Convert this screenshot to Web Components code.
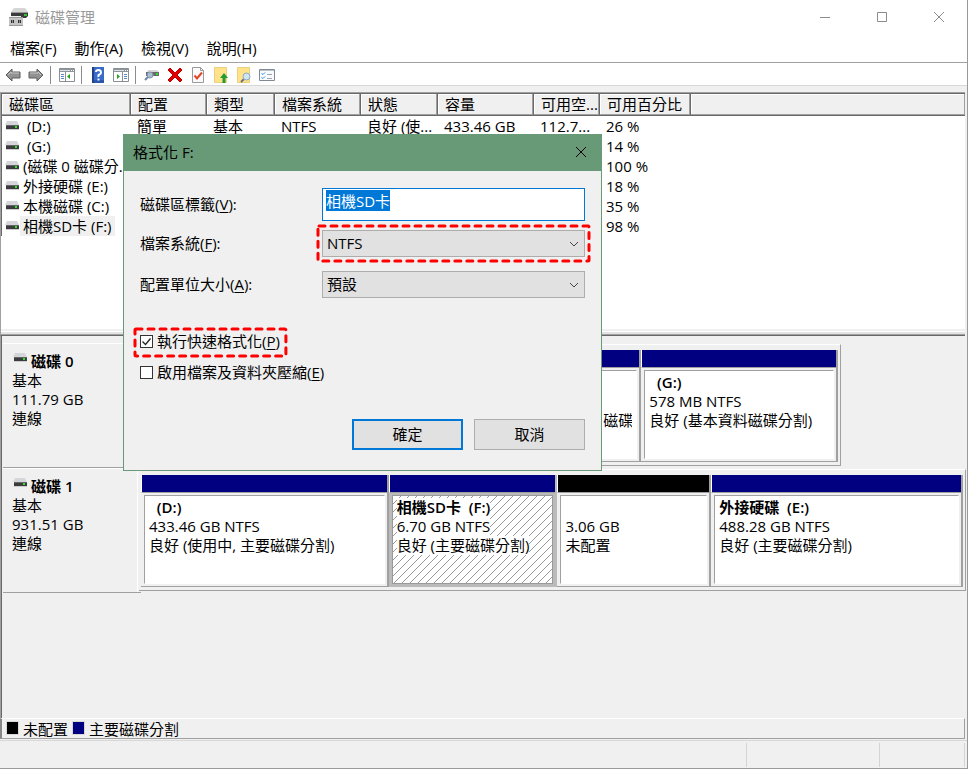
<!DOCTYPE html>
<html lang="zh-Hant">
<head>
<meta charset="utf-8">
<title>磁碟管理</title>
<style>
body { margin: 0; background: #f0f0f0; color: #000; font: 15px/19px "Open Sans", "Noto Sans CJK TC", sans-serif; }
</style>
</head>
<body>
<disk-app></disk-app>
<script>
const define = (name, html, setup) => customElements.define(name, class extends HTMLElement {
  connectedCallback() {
    if (this.shadowRoot) return;
    const t = document.createElement('template');
    t.innerHTML = '<style>*{box-sizing:border-box}:host{box-sizing:border-box}button,input,select{font:inherit;color:inherit;margin:0}button{padding:0;border:0;background:none}</style>' + html;
    this.attachShadow({ mode: 'open' }).append(t.content.cloneNode(true));
    if (setup) setup(this, this.shadowRoot);
  }
});

define('drive-icon', `
<style>:host{display:inline-block;width:14px;height:9px;flex:none}svg{display:block}</style>
<svg width="14" height="9" viewBox="0 0 14 9" aria-hidden="true"><path d="M2 0h10l2 4H0z" fill="#d5d6d9"/><path d="M1 4h13v4H1z" fill="#3c3c3e"/><path d="M1 4h13v1H1z" fill="#666"/><path d="M1 8h13v1H1z" fill="#ccc"/><path d="M10 5h2v2h-2z" fill="#2fe02f"/></svg>`);

define('window-title', `
<style>
:host{display:flex;align-items:center;height:35px;padding-left:8px;background:#fff;color:#999}
h1{margin:0 auto 0 5px;padding-bottom:1px;font-size:15px;line-height:20px;font-weight:400}
button{width:57px;height:34px;padding-bottom:1px;display:grid;place-items:center}
button svg{fill:none;stroke:#8c8c8c}
</style>
<svg width="22" height="20" viewBox="0 0 22 20" aria-hidden="true"><path d="M6 0h11l3 4H3z" fill="#d6d6d6"/><path d="M3 4h17v4l-2 2H3z" fill="#3b3b3b"/><path d="M3 4h17v1H3z" fill="#999"/><path d="M16 6h3v2h-3z" fill="#35c435"/><path d="M3 8h10v2H3z" fill="#f0f0f0"/><path d="M1 9h14v9H1z" fill="#c4c4c4"/><path d="M1 9h14v1H1zM1 17h14v1H1z" fill="#9a9a9a"/><path d="M3 12h3v3H3zM10 12h3v3h-3z" fill="#333"/><path d="M4 12h1v3H4zM11 12h1v3h-1z" fill="#888"/></svg>
<h1><slot></slot></h1>
<button aria-label="最小化"><svg width="12" height="12"><path d="M1 6.500h10"/></svg></button>
<button aria-label="最大化"><svg width="12" height="12"><path d="M1.500 1.500h9v9h-9z"/></svg></button>
<button aria-label="關閉"><svg width="12" height="12"><path d="M1 1l10 10M11 1L1 11"/></svg></button>`);

define('menu-bar', `
<style>
:host{display:block;background:#fff;border-bottom:1px solid #a0a0a0}
nav{display:flex;gap:18px;padding:3px 10px 4px;height:27px}
button{line-height:20px}
</style>
<nav><button>檔案(F)</button><button>動作(A)</button><button>檢視(V)</button><button>說明(H)</button></nav>`);

const shapes = {
  back: '<path d="M1 8l6-6v3h8v6H7v3z" fill="#929292" stroke="#5c5c5c"/><path d="M3 8l3-3v1h8" fill="none" stroke="#c6c6c6"/>',
  forward: '<path d="M15 8L9 2v3H1v6h8v3z" fill="#929292" stroke="#5c5c5c"/><path d="M2 6h8V5l3 3" fill="none" stroke="#c6c6c6"/>',
  tree: '<path d="M.5 1.500h15v13H.5z" fill="#fff" stroke="#8a8f96"/><path d="M1 2h14v3H1z" fill="#8e949c"/><path d="M1 3h10v1H1z" fill="#dde2e8"/><path d="M12 3h1v1h-1zM14 3h1v1h-1z" fill="#fff"/><path d="M6 5h1v9H6z" fill="#8a8f96"/><path d="M2 7h3v1H2zM2 9h3v1H2zM2 11h3v1H2z" fill="#5a86c4"/><path d="M11 7v5L8 9.500z" fill="#21a321"/>',
  help: '<path d="M2 0h12v16H2z" fill="#3a6bc9"/><path d="M2 0h2v16H2z" fill="#20408a"/><path d="M4 13h10v3H4z" fill="#2c56ac"/><path d="M6 5q0-2 2.500-2T11 5.500q0 1.500-1.500 2T8.500 10" stroke="#fff" stroke-width="2" fill="none"/><path d="M7.500 11.500h2v2h-2z" fill="#fff"/>',
  panel: '<path d="M.5 1.500h15v13H.5z" fill="#fff" stroke="#8a8f96"/><path d="M1 2h14v3H1z" fill="#8e949c"/><path d="M1 3h10v1H1z" fill="#dde2e8"/><path d="M12 3h1v1h-1zM14 3h1v1h-1z" fill="#fff"/><path d="M9 5h1v9H9z" fill="#8a8f96"/><path d="M11 7h3v1h-3zM11 9h3v1h-3zM11 11h3v1h-3z" fill="#5a86c4"/><path d="M4 7v5l3-2.500z" fill="#21a321"/>',
  disk: '<path d="M4 3h9l2 2H3z" fill="#d5d6d9"/><path d="M2 5h13v4H2z" fill="#68696c"/><path d="M12 6h2v2h-2z" fill="#2fe02f"/><path d="M5 9l-4 4" stroke="#6f87a3" stroke-width="2"/><circle cx="6" cy="8" r="3" fill="#a9bccf" stroke="#7e93a8"/>',
  remove: '<path d="M3 1l5 5 5-5 2 2-5 5 5 5-2 2-5-5-5 5-2-2 5-5-5-5z" fill="#e00000" stroke="#c00000"/>',
  check: '<path d="M2.500.5h8l3 3v12h-11z" fill="#fafafa" stroke="#9a9a9a"/><path d="M10.500.5v3h3" fill="none" stroke="#9a9a9a"/><path d="M4.500 8.500l2.500 3 5-6" fill="none" stroke="#e3422c" stroke-width="2"/>',
  up: '<path d="M1.500.5h12v15h-12z" fill="#ffe289" stroke="#edd07c"/><path d="M9.500 16v-5H7l4-5 4 5h-2.500v5z" fill="#249b32"/>',
  find: '<path d="M1.500.5h12v15h-12z" fill="#ffe289" stroke="#edd07c"/><path d="M8 12l-3 3" stroke="#68737e" stroke-width="2"/><circle cx="10.500" cy="9.500" r="3.500" fill="#cfe6f4" stroke="#8aaac4"/>',
  list: '<path d="M.5 2.500h15v11H.5z" fill="#f7f9fb" stroke="#808a95"/><path d="M1 3h14v1H1z" fill="#bac3cc"/><path d="M2.500 6.500l1.500 1 2-2M2.500 10.500l1.500 1 2-2" fill="none" stroke="#2d8be0"/><path d="M8 7.500h5M8 11.500h5" stroke="#9da6b0"/>'
};
customElements.define('tool-icon', class extends HTMLElement {
  connectedCallback() {
    this.attachShadow({ mode: 'open' }).innerHTML = `<style>:host{display:block}button{display:grid;place-items:center;width:23px;height:22px;border:0;padding:0;background:none}</style><button aria-label="${this.getAttribute('label')}"><svg width="16" height="16" viewBox="0 0 16 16">${shapes[this.getAttribute('shape')]}</svg></button>`;
  }
});

define('tool-bar', `
<style>
:host{display:flex;align-items:center;height:23px;padding:2px 1px 0;background:#fff;border-bottom:1px solid #d8d8d8;box-sizing:content-box}
i{width:1px;height:18px;margin:0 4px 0 3px;background:#8c8c8c}
</style>
<tool-icon shape="back" label="上一頁"></tool-icon><tool-icon shape="forward" label="下一頁"></tool-icon><i></i>
<tool-icon shape="tree" label="主控台樹狀目錄"></tool-icon><i></i>
<tool-icon shape="help" label="說明"></tool-icon><tool-icon shape="panel" label="動作窗格"></tool-icon><i></i>
<tool-icon shape="disk" label="重新掃描"></tool-icon><tool-icon shape="remove" label="刪除"></tool-icon><tool-icon shape="check" label="內容"></tool-icon><tool-icon shape="up" label="開啟"></tool-icon><tool-icon shape="find" label="瀏覽"></tool-icon><tool-icon shape="list" label="設定"></tool-icon>`);

const volumes = [
  [' (D:)', '簡單', '基本', 'NTFS', '良好 (使...', '433.46 GB', '112.7...', '26 %'],
  [' (G:)', '', '', '', '', '', '', '14 %'],
  ['(磁碟 0 磁碟分...', '', '', '', '', '', '', '100 %'],
  ['外接硬碟 (E:)', '', '', '', '', '', '', '18 %'],
  ['本機磁碟 (C:)', '', '', '', '', '', '', '35 %'],
  ['相機SD卡 (F:)', '', '', '', '', '', '', '98 %']
];
define('volume-list', `
<style>
:host{display:block;height:244px;background:#fff;border:solid;border-width:1px 0 1px 1px;border-color:#a0a0a0 #fff #696969 #a0a0a0;box-shadow:inset 0 -1px #a0a0a0,inset 0 -3px #e3e3e3,inset 0 -4px #fff,inset 0 -6px #f0f0f0;overflow:hidden}
table{width:100%;table-layout:fixed;border-collapse:separate;border-spacing:0;border-left:1px solid #696969}
th{height:23px;padding:0 0 0 7px;text-align:left;font-weight:400;background:#f0f0f0;border-top:1px solid #696969;border-right:1px solid #696969;border-bottom:1px solid #696969;box-shadow:inset -1px -1px #a0a0a0,inset 1px 1px #fff;white-space:nowrap}
th:last-child{border-right:0}
td{height:20px;padding:0 0 0 6px;line-height:20px;white-space:nowrap}
td:first-child{padding-left:3px}
.name{display:flex;align-items:center;gap:1px}
.name drive-icon{margin-bottom:1px}
.name span{padding:0 3px;white-space:pre}
tr:last-child .name span{background:#f0f0f0}
</style>
<table>
<colgroup><col style="width:129px"><col style="width:76px"><col style="width:68px"><col style="width:86px"><col style="width:77px"><col style="width:96px"><col style="width:66px"><col style="width:91px"><col></colgroup>
<thead><tr><th>磁碟區</th><th>配置</th><th>類型</th><th>檔案系統</th><th>狀態</th><th>容量</th><th>可用空...</th><th>可用百分比</th><th></th></tr></thead>
<tbody></tbody>
</table>`, (host, root) => {
  root.querySelector('tbody').innerHTML = volumes.map(([name, ...rest]) =>
    `<tr><td><div class="name"><drive-icon></drive-icon><span>${name}</span></div></td>${rest.map(v => `<td>${v}</td>`).join('')}<td></td></tr>`).join('');
});

define('disk-row', `
<style>
:host{display:grid;grid-template-columns:136px 1fr;height:125px}
.label{padding:8px 8px 0 9px;margin-right:-2px;border-top:1px solid #fff;border-bottom:1px solid #a0a0a0;box-shadow:inset -3px 0 #f0f0f0,inset -4px 0 #fff}
.head{display:flex;gap:4px;padding-left:1px;font-weight:600}
.head drive-icon{margin-top:1px}
.graph{display:grid;grid-template-columns:var(--cols);align-self:start;height:122px;margin-top:1px;padding:5px 2px 3px 2px;border:solid;border-width:1px 1px 1px 0;border-color:#fff #a0a0a0 #a0a0a0}
.area{display:grid;grid-template-columns:var(--span);min-width:0}
</style>
<div class="label"><div class="head"><drive-icon></drive-icon><slot name="title"></slot></div><slot name="info"></slot></div>
<div class="area"><div class="graph"><slot></slot></div></div>`);

define('disk-partition', `
<style>
:host{display:flex;flex-direction:column;min-width:0;border-right:2px solid #a0a0a0;border-bottom:1px solid #a0a0a0;height:112px}
.bar{height:18px;background:var(--bar,#000080);border-bottom:1px solid #a0a0a0;border-left:1px solid #fff}
.body{flex:1;position:relative;margin:2px 2px 2px 3px;padding:2px 4px;background:#fff;border:solid;border-width:1px;border-color:#a0a0a0 #fff #fff #a0a0a0;overflow:hidden;white-space:nowrap}
:host([selected]){background:#bababa;border-color:#bababa}
:host([selected]) .body{border-color:#999}
svg{display:none}
:host([selected]) svg{display:block;position:absolute;inset:0;width:100%;height:100%}
.text{position:relative;display:flex;flex-direction:column;align-items:flex-start;overflow:hidden}
::slotted(*){background:#fff;white-space:pre;min-height:19px}
::slotted(b){font-weight:600}
</style>
<div class="bar"></div>
<div class="body"><svg aria-hidden="true"><defs><pattern id="h" width="8" height="8" patternUnits="userSpaceOnUse"><path d="M-1 9L9 -1M-1 1L1 -1M7 9L9 7" stroke="#999" stroke-width="1"/></pattern></defs><rect width="100%" height="100%" fill="url(#h)"/></svg><div class="text"><slot></slot></div></div>`);

define('graph-legend', `
<style>
:host{display:flex;align-items:center;gap:5px;height:21px;padding:1px 5px 0;border-top:1px solid #fff;border-right:1px solid #a0a0a0;border-bottom:1px solid #a0a0a0}
i{width:11px;height:12px;margin-bottom:3px;background:#000;outline:1px solid #d8d8d8}
i.p{background:#000080}
</style>
<i></i><span>未配置</span><i class="p"></i><span>主要磁碟分割</span>`);

define('status-bar', `
<style>
:host{display:grid;grid-template-columns:1fr 133px 85px;height:29px;padding:2px 2px 1px 0;border-top:1px solid #d8d8d8;border-bottom:1px solid #999}
span{border-right:1px solid #d4d4d4}
</style><span></span><span></span><span></span>`);

define('dash-frame', `
<style>
:host{position:relative;display:block}
svg{position:absolute;inset:var(--out,-5px);width:calc(100% - 2 * var(--out,-5px));height:calc(100% - 2 * var(--out,-5px));pointer-events:none;overflow:visible}
</style>
<slot></slot><svg aria-hidden="true"><rect x="0" y="0" width="100%" height="100%" rx="1" fill="none" stroke="#f00" stroke-width="3" stroke-dasharray="6 6" stroke-linecap="round"/></svg>`);

define('format-dialog', `
<style>
:host{display:block;background:#f0f0f0;border:1px solid #689a78}
header{display:flex;align-items:center;justify-content:space-between;height:36px;padding:0 11px 2px 9px;background:#689a78}
h2{margin:0;font-size:15px;font-weight:400}
header button{width:18px;height:18px;display:grid;place-items:center}
form{padding:17px 16px 20px}
.fields{display:grid;grid-template-columns:182px 1fr;align-items:center}
.f1{margin-bottom:9px}.f2{margin-bottom:14px}
input[type=text]{display:block;width:100%;height:33px;padding:2px 3px 10px;line-height:19px;background:#fff;border:1px solid #0078d7;border-radius:0;outline:0}
input::selection{background:#0078d7;color:#fff}
.sel{position:relative}
select{display:block;appearance:none;width:100%;height:27px;padding:0 4px;background:#e1e1e1;border:1px solid #adadad;border-radius:0;outline:0}
.sel svg{position:absolute;right:6px;top:11px;pointer-events:none}
.checks{margin-top:28px;display:flex;flex-direction:column;align-items:flex-start}
.checks label{display:flex;align-items:center;gap:4px;height:31px}
input[type=checkbox]{appearance:none;width:13px;height:13px;background:#fff;border:1px solid #333;display:grid;place-items:center}
.box{position:relative;display:grid}
.box svg{position:absolute;inset:0;pointer-events:none}
.quick{position:relative}
.quick dash-frame{position:absolute;inset:3px -6px 1px -5px;--out:0px;pointer-events:none}
.actions{display:flex;justify-content:flex-end;gap:11px;margin-top:31px}
.actions button{width:111px;height:31px;background:#e1e1e1;border:1px solid #adadad}
.actions button.ok{border:2px solid #0078d7}
u{text-underline-offset:2px}
</style>
<header><h2>格式化 F:</h2><button aria-label="關閉"><svg width="12" height="12"><path d="M1 1l10 10M11 1L1 11" stroke="#000"/></svg></button></header>
<form onsubmit="return false">
<div class="fields f1"><label for="v">磁碟區標籤(<u>V</u>):</label><input id="v" type="text" value="相機SD卡"></div>
<div class="fields f2"><label for="f">檔案系統(<u>F</u>):</label><dash-frame style="--out:-4px"><div class="sel"><select id="f"><option>NTFS</option></select><svg width="10" height="7"><path d="M1 1l4 4 4-4" fill="none" stroke="#444"/></svg></div></dash-frame></div>
<div class="fields"><label for="a">配置單位大小(<u>A</u>):</label><div class="sel"><select id="a"><option>預設</option></select><svg width="10" height="7"><path d="M1 1l4 4 4-4" fill="none" stroke="#444"/></svg></div></div>
<div class="checks">
<div class="quick"><label><span class="box"><input type="checkbox" checked><svg width="13" height="13"><path d="M2.500 6.500l3 3 5-6" fill="none" stroke="#222" stroke-width="1.300"/></svg></span><span>執行快速格式化(<u>P</u>)</span></label><dash-frame></dash-frame></div>
<label><span class="box"><input type="checkbox"></span><span>啟用檔案及資料夾壓縮(<u>E</u>)</span></label>
</div>
<div class="actions"><button class="ok">確定</button><button type="button">取消</button></div>
</form>`, (host, root) => {
  const i = root.querySelector('#v');
  i.focus();
  i.select();
});

define('disk-app', `
<style>
:host{display:flex;flex-direction:column;min-height:100vh;position:relative;background:#f0f0f0;border-right:1px solid #999}
volume-list{margin:6px 2px 0 0}
.disks{flex:1;margin-right:1px;padding-top:7px;border-left:1px solid #a0a0a0;box-shadow:inset 1px 0 #696969;padding-left:2px}
graph-legend{margin:0 2px 0 0;border-left:2px solid #888}
status-bar{margin-top:1px}
format-dialog{position:absolute;left:123px;top:134px;width:479px}
span{display:block}
.pair{display:grid;grid-template-columns:453fr 46fr;min-width:0}
</style>
<window-title>磁碟管理</window-title>
<menu-bar></menu-bar>
<tool-bar></tool-bar>
<volume-list></volume-list>
<div class="disks">
<disk-row style="--cols:499fr 196fr;--span:701fr 125fr"><span slot="title">磁碟 0</span><span slot="info">基本</span><span slot="info">111.79 GB</span><span slot="info">連線</span>
<div class="pair"><disk-partition></disk-partition><disk-partition><b></b><span></span><span>磁碟分</span></disk-partition></div>
<disk-partition><b>  (G:)</b><span>578 MB NTFS</span><span>良好 (基本資料磁碟分割)</span></disk-partition></disk-row>
<disk-row style="--cols:248fr 169fr 154fr 252fr;--span:1fr"><span slot="title">磁碟 1</span><span slot="info">基本</span><span slot="info">931.51 GB</span><span slot="info">連線</span>
<disk-partition><b>  (D:)</b><span>433.46 GB NTFS</span><span>良好 (使用中, 主要磁碟分割)</span></disk-partition>
<disk-partition selected><b>相機SD卡  (F:)</b><span>6.70 GB NTFS</span><span>良好 (主要磁碟分割)</span></disk-partition>
<disk-partition style="--bar:#000"><b></b><span>3.06 GB</span><span>未配置</span></disk-partition>
<disk-partition><b>外接硬碟  (E:)</b><span>488.28 GB NTFS</span><span>良好 (主要磁碟分割)</span></disk-partition></disk-row>
</div>
<graph-legend></graph-legend>
<status-bar></status-bar>
<format-dialog role="dialog" aria-label="格式化 F:"></format-dialog>`);
</script>
</body>
</html>
